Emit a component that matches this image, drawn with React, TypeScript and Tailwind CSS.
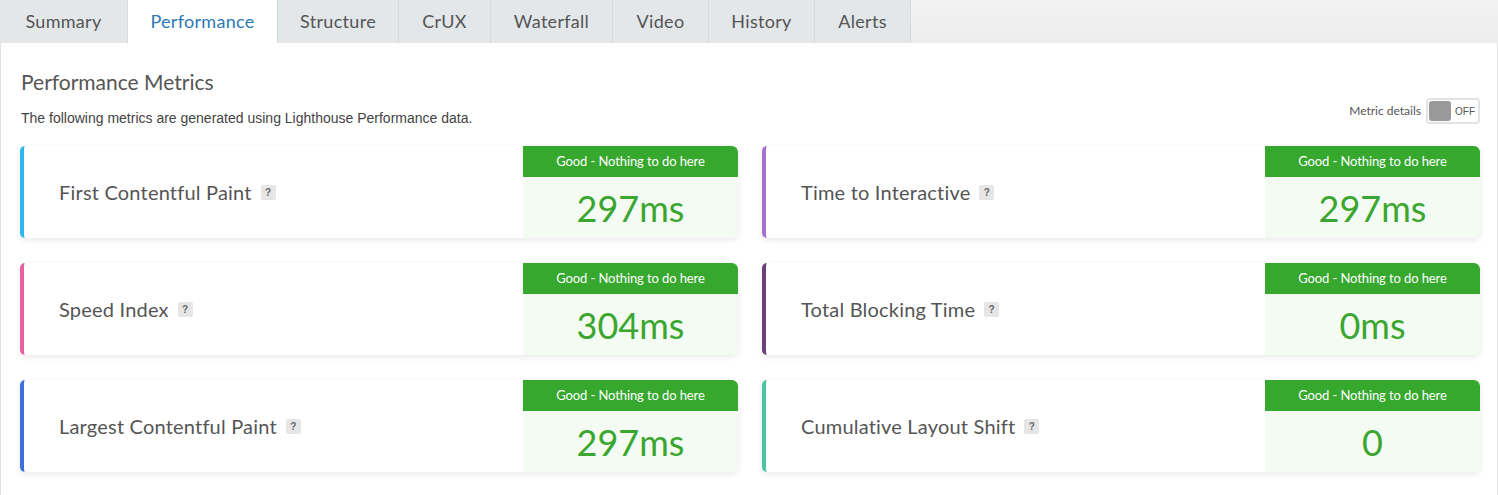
import { ReactNode } from "react";

const tabs = [
  { name: "Summary", w: "w-[128px]" },
  { name: "Performance", w: "w-[150px]", active: true },
  { name: "Structure", w: "w-[121px]" },
  { name: "CrUX", w: "w-[92px]" },
  { name: "Waterfall", w: "w-[122px]" },
  { name: "Video", w: "w-[96px]" },
  { name: "History", w: "w-[106px]" },
  { name: "Alerts", w: "w-[96px]" },
];

const metrics = [
  { label: "First Contentful Paint", value: "297ms", bar: "border-[#2fb6ec]" },
  { label: "Time to Interactive", value: "297ms", bar: "border-[#a86fcb]" },
  { label: "Speed Index", value: "304ms", bar: "border-[#e8619e]" },
  { label: "Total Blocking Time", value: "0ms", bar: "border-[#6c3f7c]" },
  { label: "Largest Contentful Paint", value: "297ms", bar: "border-[#3b72d9]" },
  { label: "Cumulative Layout Shift", value: "0", bar: "border-[#4bc4a1]" },
];

const Help = () => (
  <span className="ml-[9px] inline-flex h-[15px] w-[15px] items-center justify-center rounded-[2px] bg-[#e6e6e6] font-['Liberation_Sans'] text-[10px] font-bold text-[#666]">
    ?
  </span>
);

const Card = ({ label, value, bar }: { label: string; value: ReactNode; bar: string }) => (
  <div className={`flex h-[92px] overflow-hidden rounded-[5px] border-l-4 bg-white shadow-[0_2px_6px_rgba(0,0,0,0.09)] ${bar}`}>
    <div className="flex flex-1 items-center pl-[35px] text-[20px] tracking-[0.2px] text-[#555]">
      {label}
      <Help />
    </div>
    <div className="flex w-[215px] flex-col rounded-tr-[6px]">
      <div className="flex h-[31px] items-center justify-center rounded-tr-[6px] bg-[#36a82e] text-[13px] tracking-[-0.1px] text-white">
        Good - Nothing to do here
      </div>
      <div className="flex flex-1 items-center justify-center bg-[#f4fbf3] text-[36px] text-[#3aa62f]">{value}</div>
    </div>
  </div>
);

export default function App() {
  return (
    <div className="h-[495px] w-[1498px] overflow-hidden bg-white font-['Lato',sans-serif]">
      <div className="flex h-[43px] bg-[#efefef] bg-[linear-gradient(to_bottom,#f3f3f3,#ececec)]">
        {tabs.map((t) => (
          <div
            key={t.name}
            className={`flex h-full items-center justify-center border-r border-[#d3d8db] text-[18px] tracking-[0.3px] ${t.w} ${
              t.active ? "bg-white text-[#2e78b5]" : "bg-[#e3e7ea] text-[#555]"
            }`}
          >
            {t.name}
          </div>
        ))}
      </div>
      <div className="h-[452px] border-x border-[#e2e2e2] pl-[19px] pr-[17px] pt-[25px]">
        <h2 className="pl-[1px] text-[21px] leading-[28px] text-[#555]">Performance Metrics</h2>
        <div className="flex items-start justify-between">
          <p className="mt-[12px] pl-[1px] font-['Liberation_Sans',sans-serif] text-[14px] leading-[20px] text-[#444]">
            The following metrics are generated using Lighthouse Performance data.
          </p>
          <div className="mt-[2px] flex items-center gap-[5px] text-[12px] text-[#555]">
            Metric details
            <div className="flex h-[26px] w-[54px] items-center gap-[4px] rounded-[4px] border-2 border-[#e3e3e3] px-[1px]">
              <span className="h-[20px] w-[22px] rounded-[3px] bg-[#999]" />
              <span className="font-['Liberation_Sans',sans-serif] text-[10px] text-[#555]">OFF</span>
            </div>
          </div>
        </div>
        <div className="mt-[18px] grid grid-cols-2 gap-x-[24px] gap-y-[25px]">
          {metrics.map((m) => (
            <Card key={m.label} {...m} />
          ))}
        </div>
      </div>
    </div>
  );
}
